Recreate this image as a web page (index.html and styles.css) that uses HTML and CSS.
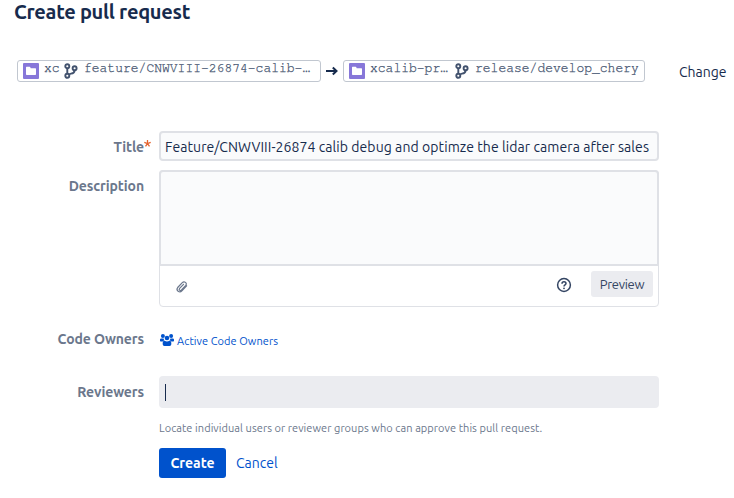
FILE: index.html
```html
<!DOCTYPE html>
<html lang="en">
<head>
<meta charset="utf-8">
<title>Create pull request</title>
<link rel="stylesheet" href="styles.css">
</head>
<body>
<svg class="defs" aria-hidden="true">
  <symbol id="folder" viewBox="0 0 16 16">
    <rect width="16" height="16" rx="1" fill="#8777d9"/>
    <path d="M3 4.400q0-.6.6-.6h3q.5 0 .7.500l.4.900h4.700q.6 0 .6.600v5.400q0 .7-.7.700H3.700q-.7 0-.7-.7z" fill="#fff"/>
  </symbol>
  <symbol id="branch" viewBox="0 0 14 16">
    <g fill="none" stroke="#42526e" stroke-width="1.900">
      <circle cx="3.300" cy="3.200" r="2"/>
      <circle cx="3.300" cy="12.800" r="2"/>
      <circle cx="10.600" cy="5.200" r="2"/>
      <path d="M3.300 5v6M10.600 7.200c0 2.600-1.800 3.200-3.600 3.400-1 .1-1.500.5-2 1"/>
    </g>
  </symbol>
</svg>
<main class="page">
  <h1><span>Create pull request</span></h1>
  <div class="branches">
    <div class="ref source">
      <svg class="repo-icon"><use href="#folder"/></svg>
      <span class="repo">xc</span>
      <svg class="branch-icon"><use href="#branch"/></svg>
      <span class="branch">feature/CNWVIII-26874-calib-…</span>
    </div>
    <svg class="arrow" viewBox="0 0 12 10"><path d="M0 5h10M6.800 1.500 10.500 5 6.800 8.500" fill="none" stroke="#172b4d" stroke-width="2"/></svg>
    <div class="ref target">
      <svg class="repo-icon"><use href="#folder"/></svg>
      <span class="repo">xcalib-pr…</span>
      <svg class="branch-icon"><use href="#branch"/></svg>
      <span class="branch">release/develop_chery</span>
    </div>
    <a class="change">Change</a>
  </div>
  <form>
    <div class="row title-row">
      <div class="label"><span>Title</span><svg class="required" viewBox="0 0 7 7"><path d="M3.500 0v3.500M.3 2.400l3.200 1.100 3.200-1.100M1.500 6.300l2-2.800 2 2.800" fill="none" stroke="#e5632f" stroke-width="1.300"/></svg></div>
      <div class="input"><span>Feature/CNWVIII-26874 calib debug and optimze the lidar camera after sales</span></div>
    </div>
    <div class="row description-row">
      <div class="label"><span>Description</span></div>
      <div class="editor">
        <div class="textarea"></div>
        <div class="toolbar">
          <svg class="clip" viewBox="0 0 14 14"><path d="M11.600 5.800 6.900 10.900C4.600 13.200.5 10.600 2.700 7.500L7.300 2.600c2-2 5.300.5 3.500 2.800L6.500 10C5.100 11.300 3.400 9.600 4.600 8.300L8.500 4.300" fill="none" stroke="#6b778c" stroke-width="1.200" stroke-linecap="round"/></svg>
          <svg class="help" viewBox="0 0 16 16"><circle cx="8" cy="8" r="6.400" fill="none" stroke="#344563" stroke-width="1.500"/><path d="M6 6.700c0-2.700 4-2.500 4-.2 0 1.400-2 1.300-2 2.900" fill="none" stroke="#344563" stroke-width="1.500"/><circle cx="8" cy="11.300" r=".9" fill="#344563"/></svg>
          <div class="preview"><span>Preview</span></div>
        </div>
      </div>
    </div>
    <div class="row owners-row">
      <div class="label"><span>Code Owners</span></div>
      <a class="owners"><svg viewBox="0 0 14 12" fill="#0052cc"><circle cx="2.900" cy="2" r="2"/><circle cx="11.100" cy="2" r="2"/><path d="M0 6.800V5.600Q0 4.400 1.300 4.400h2.300q.2 1.300 1 1.900-1.300.1-1.800 1.300H.7Q0 7.600 0 6.800zM14 6.800V5.600q0-1.200-1.300-1.200h-2.300q-.2 1.300-1 1.900 1.300.1 1.800 1.300h2.100q.7 0 .7-.8z"/><circle cx="7" cy="4" r="2.300"/><path d="M2.700 10.200V8.700q0-1.700 1.900-1.900Q7 8.400 9.400 6.800q1.900.2 1.900 1.900v1.500q0 1.800-1.700 1.800H4.400q-1.700 0-1.700-1.800z"/></svg><span>Active Code Owners</span></a>
    </div>
    <div class="row reviewers-row">
      <div class="label"><span>Reviewers</span></div>
      <div class="reviewers"><i class="caret"></i></div>
    </div>
    <p class="hint"><span>Locate individual users or reviewer groups who can approve this pull request.</span></p>
    <div class="actions">
      <div class="create"><span>Create</span></div>
      <a class="cancel"><span>Cancel</span></a>
    </div>
  </form>
</main>
</body>
</html>
```
FILE: styles.css
```css
* { box-sizing: border-box; }
body { margin: 0; background: #fff; color: #172b4d; font: 14px/20px "Ubuntu", "Noto Sans", sans-serif; white-space: nowrap; overflow: hidden; }
.defs { display: none; }
svg { flex: none; display: block; }
.page { width: 734px; height: 498px; }
h1 { margin: 0; padding-left: 14px; height: 60px; font-size: 20px; line-height: 24px; font-weight: 600; letter-spacing: -.27px; }
.branches { display: flex; height: 22px; }
.ref { display: flex; height: 22px; border: 1px solid #c1c7d0; border-radius: 3px; padding-left: 5px; color: #42526e; font: 13px/16px "Nimbus Mono PS", "Nimbus Mono L", "FreeMono", "Liberation Mono", monospace; -webkit-text-stroke: .25px #42526e; }
.source { width: 304px; margin-left: 17px; }
.target { width: 302px; }
.repo-icon { width: 16px; height: 16px; margin: 2px 5px 0 0; }
.repo { width: 78px; }
.source .repo { width: 14px; }
.branch-icon { width: 14px; height: 16px; margin: 2px 6px 0 6px; }
.target .branch-icon { margin-left: 7px; }
.arrow { width: 12px; height: 10px; margin: 6px 5px 0 5px; }
.change { margin: 2px 0 0 34px; }
form { padding-top: 49px; }
.row { display: flex; }
.label { width: 144px; margin-right: 15px; display: flex; justify-content: flex-end; color: #6b778c; font-weight: 600; line-height: 20px; letter-spacing: -.1px; }
.title-row { height: 39px; }
.title-row .label { padding-top: 6px; position: relative; }
.required { position: absolute; left: 144px; top: 9px; width: 7px; height: 7px; }
.input { width: 500px; height: 30px; border: 2px solid #dfe1e6; border-radius: 4px; background: #fafbfc; padding: 4px; letter-spacing: .08px; }
.description-row { height: 159px; }
.description-row .label { padding-top: 6px; }
.editor { width: 500px; height: 137px; border: 1px solid #dfe1e6; border-radius: 4px; }
.textarea { height: 96px; margin: -1px -1px 0; border: 2px solid #dfe1e6; border-radius: 4px 4px 0 0; background: #fafbfc; }
.toolbar { display: flex; padding: 5px 5px 0 15px; }
.clip { width: 14px; height: 14px; margin-top: 9px; }
.help { width: 16px; height: 16px; margin: 6px 19px 0 auto; }
.preview { width: 62px; height: 26px; border-radius: 3px; background: #ebecf0; color: #344563; text-align: center; line-height: 26px; font-size: 13px; letter-spacing: -.3px; }
.owners-row { height: 47px; }
.owners { display: flex; padding-top: 5px; color: #0052cc; font-size: 11px; line-height: 14px; letter-spacing: .07px; }
.owners svg { width: 14px; height: 12px; margin: 0 3px 0 1px; }
.reviewers-row .label { padding-top: 6px; }
.reviewers { width: 500px; height: 32px; border-radius: 4px; background: #ebecf0; padding: 8px 6px; }
.caret { display: block; width: 1px; height: 17px; background: #172b4d; }
.hint { margin: 12px 0 0 159px; height: 28px; color: #6b778c; font-size: 11px; line-height: 16px; letter-spacing: .06px; }
.actions { display: flex; padding-left: 159px; line-height: 30px; }
.create { width: 67px; height: 30px; border-radius: 3px; background: #0052cc; color: #fff; text-align: center; font-weight: 700; }
.cancel { margin-left: 10px; color: #0052cc; }
```
